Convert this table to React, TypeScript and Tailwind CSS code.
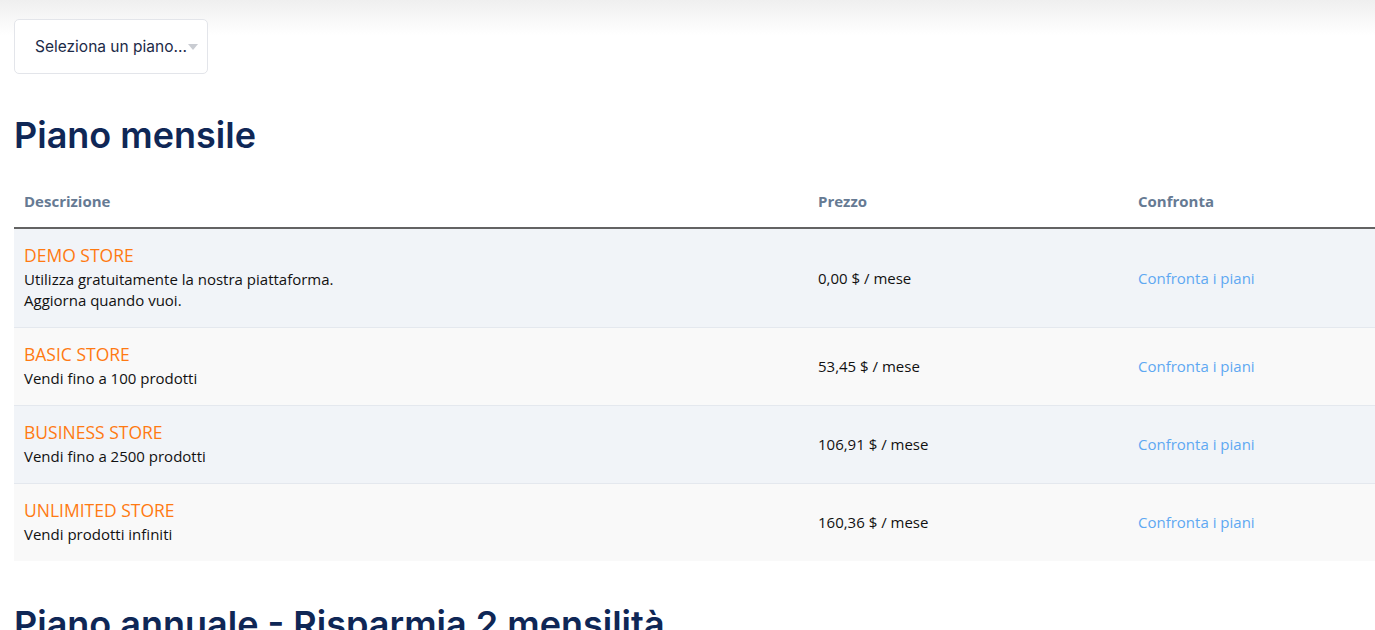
import React from "react";

interface Plan {
  name: string;
  lines: string[];
  price: string;
}

const plans: Plan[] = [
  {
    name: "DEMO STORE",
    lines: ["Utilizza gratuitamente la nostra piattaforma.", "Aggiorna quando vuoi."],
    price: "0,00 $ / mese",
  },
  { name: "BASIC STORE", lines: ["Vendi fino a 100 prodotti"], price: "53,45 $ / mese" },
  { name: "BUSINESS STORE", lines: ["Vendi fino a 2500 prodotti"], price: "106,91 $ / mese" },
  { name: "UNLIMITED STORE", lines: ["Vendi prodotti infiniti"], price: "160,36 $ / mese" },
];

export default function App() {
  return (
    <div className="min-h-screen w-full overflow-hidden bg-gradient-to-b from-[#efefef] via-white to-white bg-[length:100%_70px] bg-no-repeat bg-white font-['Open_Sans',sans-serif]">
      <div className="pl-[14px] pt-[19px]">
        {/* Plan select */}
        <div className="flex h-[55px] w-[194px] items-center rounded-[5px] border border-[#e3e5ea] bg-white pl-[20px] font-['Inter',sans-serif] text-[15.5px] text-[#1c2a47]">
          <span>Seleziona un piano...</span>
          <span className="ml-[1px] mt-[1px] h-0 w-0 border-x-[5px] border-t-[6px] border-x-transparent border-t-[#c9ccd2]" />
        </div>

        <h2 className="mt-[38px] font-['Inter',sans-serif] text-[36px] font-semibold leading-[46px] text-[#0f2756]">
          Piano mensile
        </h2>

        <table className="mt-[22px] w-[1361px] border-collapse text-left">
          <thead>
            <tr className="border-b-2 border-[#636363]">
              <th className="h-[48px] w-[794px] px-[10px] pb-[4px] text-[15px] font-bold text-[#667a93]">Descrizione</th>
              <th className="w-[320px] px-[10px] pb-[4px] text-[15px] font-bold text-[#667a93]">Prezzo</th>
              <th className="px-[10px] pb-[4px] text-[15px] font-bold text-[#667a93]">Confronta</th>
            </tr>
          </thead>
          <tbody>
            {plans.map((p, i) => (
              <tr
                key={p.name}
                className={`${i % 2 === 0 ? "bg-[#f1f4f8]" : "bg-[#f9f9f9]"} ${i < plans.length - 1 ? "border-b border-[#e4e8ee]" : ""}`}
              >
                <td className="px-[10px] pb-[16px] pt-[14px] align-top">
                  <div className="text-[17.5px] leading-[24px] text-[#ff7a12]">{p.name}</div>
                  <div className="mt-[2px] text-[15px] leading-[21px] text-[#111]">
                    {p.lines.map((l) => (
                      <div key={l}>{l}</div>
                    ))}
                  </div>
                </td>
                <td className="px-[10px] text-[15px] text-[#111]">{p.price}</td>
                <td className="px-[10px] text-[15px]">
                  <a href="#" className="text-[#5ea8f2]">Confronta i piani</a>
                </td>
              </tr>
            ))}
          </tbody>
        </table>

        <h2 className="mt-[40px] font-['Inter',sans-serif] text-[36px] font-semibold leading-[46px] text-[#0f2756]">
          Piano annuale - Risparmia 2 mensilità
        </h2>
      </div>
    </div>
  );
}
